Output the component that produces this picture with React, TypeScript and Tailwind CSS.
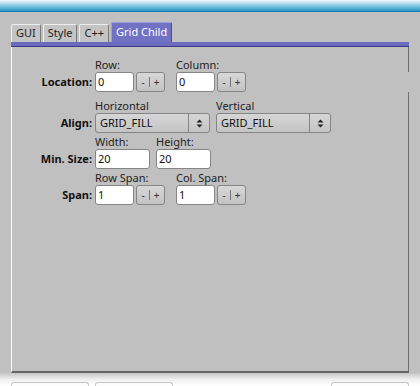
import type { ReactNode } from 'react';

const TABS = ['GUI', 'Style', 'C++'];

function TextBox({ value, w }: { value: string; w: string }) {
  return (
    <div className={`flex h-[20px] items-center rounded-[3px] border border-[#858585] bg-white pl-[2px] ${w}`}>
      {value}
    </div>
  );
}

function Stepper() {
  return (
    <div className="flex h-[20px] w-[29px] items-center justify-center rounded-[3px] border border-[#858585] bg-gradient-to-b from-[#d8d8d8] to-[#c2c2c2] text-[10px] text-[#333]">
      <span>-</span>
      <span className="mx-[4px] h-[10px] w-px bg-[#777]" />
      <span>+</span>
    </div>
  );
}

function Select({ value }: { value: string }) {
  return (
    <div className="flex h-[20px] w-[115px] items-center rounded-[3px] border border-[#858585] bg-gradient-to-b from-[#d6d6d6] to-[#c4c4c4]">
      <span className="flex-1 pl-[4px]">{value}</span>
      <span className="flex h-full w-[21px] items-center justify-center border-l border-[#858585]">
        <svg width="7" height="9" viewBox="0 0 7 9">
          <path d="M0.5 3.5 L3.5 0.5 L6.5 3.5 Z" fill="#222" />
          <path d="M0.5 5.5 L3.5 8.5 L6.5 5.5 Z" fill="#222" />
        </svg>
      </span>
    </div>
  );
}

function Field({ label, children }: { label: string; children: ReactNode }) {
  return (
    <div className="flex flex-col">
      <span className="h-[14px] leading-[14px] text-[#222]">{label}</span>
      <div className="flex gap-[2px]">{children}</div>
    </div>
  );
}

function Row({ label, gap, className = '', children }: { label: string; gap: string; className?: string; children: ReactNode }) {
  return (
    <div className={`flex items-end gap-[3px] ${className}`}>
      <span className="flex h-[20px] w-[80px] items-center justify-end font-bold">{label}</span>
      <div className={`flex ${gap}`}>{children}</div>
    </div>
  );
}

export default function App() {
  return (
    <div className="relative flex h-[386px] w-[420px] flex-col overflow-hidden bg-[#c0c0c0] text-[11px] text-[#111] [font-family:'Noto_Sans',sans-serif]">
      <div className="h-[12px] border-b border-[#1a7fae] bg-gradient-to-b from-[#f2fafd] via-[#86cbe4] to-[#1f95c4]" />

      <div className="mt-[10px] flex items-end gap-[2px] pl-[11px]">
        {TABS.map((t) => (
          <div
            key={t}
            className="flex h-[18px] items-center rounded-t-[2px] border border-b-0 border-t-[#eeeeee] border-l-[#eeeeee] border-r-[#7a7a7a] bg-[#c4c4c4] px-[4px] text-[#222]"
          >
            {t}
          </div>
        ))}
        <div className="flex h-[20px] items-center rounded-t-[2px] border border-b-0 border-t-[#9c9ce0] border-l-[#9c9ce0] border-r-[#4a4a9a] bg-[#7272c4] px-[4px] text-white">
          Grid Child
        </div>
      </div>

      <div className="mx-[11px] h-[5px] border-b border-[#3a3a84] bg-[#6a6abf]" />

      <div className="relative mx-[11px] flex h-[326px] flex-col border-b-2 border-l border-r border-b-[#666666] border-l-white border-r-[#6e6e6e] pt-[11px]">
        <div className="absolute -right-px top-[25px] h-[20px] w-px bg-[#c0c0c0]" />
        <Row label="Location:" gap="gap-[11px]">
          <Field label="Row:">
            <TextBox value="0" w="w-[39px]" />
            <Stepper />
          </Field>
          <Field label="Column:">
            <TextBox value="0" w="w-[39px]" />
            <Stepper />
          </Field>
        </Row>
        <Row label="Align:" gap="gap-[6px]" className="mt-[7px]">
          <Field label="Horizontal">
            <Select value="GRID_FILL" />
          </Field>
          <Field label="Vertical">
            <Select value="GRID_FILL" />
          </Field>
        </Row>
        <Row label="Min. Size:" gap="gap-[6px]" className="mt-[2px]">
          <Field label="Width:">
            <TextBox value="20" w="w-[55px]" />
          </Field>
          <Field label="Height:">
            <TextBox value="20" w="w-[55px]" />
          </Field>
        </Row>
        <Row label="Span:" gap="gap-[11px]" className="mt-[2px]">
          <Field label="Row Span:">
            <TextBox value="1" w="w-[39px]" />
            <Stepper />
          </Field>
          <Field label="Col. Span:">
            <TextBox value="1" w="w-[39px]" />
            <Stepper />
          </Field>
        </Row>
      </div>

      <div className="relative flex-1 bg-gradient-to-b from-[#c6c6c6] via-[#f0f0f0] to-white">
        <div className="absolute left-[11px] top-[9px] h-[10px] w-[78px] rounded-t-[3px] border border-b-0 border-[#c8c8c8]" />
        <div className="absolute left-[95px] top-[9px] h-[10px] w-[78px] rounded-t-[3px] border border-b-0 border-[#c8c8c8]" />
        <div className="absolute left-[331px] top-[9px] h-[10px] w-[78px] rounded-t-[3px] border border-b-0 border-[#c8c8c8]" />
      </div>
    </div>
  );
}
